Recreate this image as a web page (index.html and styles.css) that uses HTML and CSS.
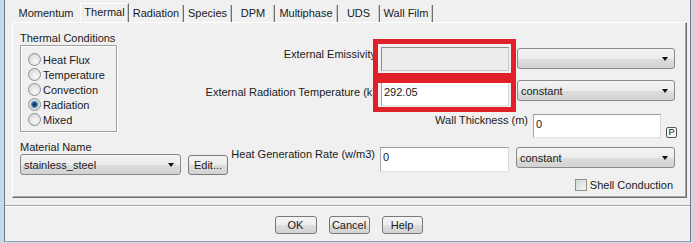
FILE: index.html
```html
<!DOCTYPE html>
<html lang="en">
<head>
    <meta charset="UTF-8">
    <title>Wall - Thermal</title>
    <link rel="stylesheet" href="styles.css">
</head>
<body>
    <div class="window">
        <div class="tabs">
            <div class="tab tab-momentum">Momentum</div>
            <div class="tab tab-thermal active">Thermal</div>
            <div class="tab tab-radiation">Radiation</div>
            <div class="tab tab-species">Species</div>
            <div class="tab tab-dpm">DPM</div>
            <div class="tab tab-multiphase">Multiphase</div>
            <div class="tab tab-uds">UDS</div>
            <div class="tab tab-wallfilm">Wall Film</div>
        </div>

        <div class="panel">
            <div class="left">
                <div class="group-label">Thermal Conditions</div>
                <div class="radio-box">
                    <div class="radio"><span class="dot"></span>Heat Flux</div>
                    <div class="radio"><span class="dot"></span>Temperature</div>
                    <div class="radio"><span class="dot"></span>Convection</div>
                    <div class="radio checked"><span class="dot"></span>Radiation</div>
                    <div class="radio"><span class="dot"></span>Mixed</div>
                </div>
                <div class="mat-label">Material Name</div>
                <div class="mat-row">
                    <div class="combo combo-mat">stainless_steel<span class="arrow"></span></div>
                    <button class="btn btn-edit">Edit...</button>
                </div>
            </div>

            <div class="right">
                <div class="row row-emis">
                    <span class="lbl">External Emissivity</span>
                    <input class="field" type="text" value="" disabled>
                    <div class="combo"><span class="arrow"></span></div>
                </div>
                <div class="row row-temp">
                    <span class="lbl">External Radiation Temperature (k)</span>
                    <input class="field" type="text" value="292.05">
                    <div class="combo">constant<span class="arrow"></span></div>
                </div>
                <div class="row row-wall">
                    <span class="lbl">Wall Thickness (m)</span>
                    <input class="field" type="text" value="0">
                    <span class="pbtn">P</span>
                </div>
                <div class="row row-heat">
                    <span class="lbl">Heat Generation Rate (w/m3)</span>
                    <input class="field" type="text" value="0">
                    <div class="combo">constant<span class="arrow"></span></div>
                </div>
                <div class="row row-shell">
                    <span class="check"></span>
                    <span class="check-label">Shell Conduction</span>
                </div>
            </div>
        </div>

        <div class="footer">
            <button class="btn btn-ok">OK</button>
            <button class="btn btn-cancel">Cancel</button>
            <button class="btn btn-help">Help</button>
        </div>

        <!-- red highlight boxes -->
        <div class="mark mark-emis"></div>
        <div class="mark mark-temp"></div>
    </div>
</body>
</html>
```

FILE: styles.css
```css
body {
    margin: 0;
    background-color: #c6d9ee;
    font-family: "Liberation Sans", Arial, sans-serif;
    font-size: 11px;
    color: #1a1a1a;
}

.window {
    position: relative;
    height: 242px;
    margin: 0 3px 0 4px;
    padding-top: 3px;
    box-sizing: border-box;
    background-color: #f0f0f0;
    border-left: 1px solid #6f7985;
    border-right: 1px solid #6f7985;
    border-bottom: 1px solid #9aa3ad;
}

/* tabs */
.tabs {
    display: flex;
    align-items: flex-end;
    height: 19px;
    margin-left: 7px;
}

.tab {
    height: 17px;
    line-height: 17px;
    text-align: center;
    box-sizing: border-box;
    border-right: 1px solid #6e6e6e;
    box-shadow: inset -1px 0 0 #c8c8c8;
}

.tab.active {
    height: 19px;
    line-height: 17px;
    border-top: 1px solid #fff;
    border-left: 1px solid #fff;
}

.tab-momentum { width: 68px; border-right: none; box-shadow: none; }
.tab-thermal { width: 49px; }
.tab-radiation { width: 55px; }
.tab-species { width: 48px; }
.tab-dpm { width: 43px; }
.tab-multiphase { width: 63px; }
.tab-uds { width: 42px; }
.tab-wallfilm { width: 53px; }

/* tab page */
.panel {
    display: flex;
    height: 176px;
    margin: 0 3px 0 7px;
    padding: 8px 0 0 7px;
    box-sizing: border-box;
    border: 1px solid;
    border-color: #fff #6d6d6d #6d6d6d #fff;
    box-shadow: inset -1px -1px 0 #a8a8a8;
}

.left {
    width: 208px;
    flex: none;
}

.group-label, .mat-label {
    line-height: 14px;
}

.radio-box {
    width: 97px;
    height: 87px;
    padding: 6px 0 0 7px;
    box-sizing: border-box;
    border: 1px solid #a0a0a0;
    box-shadow: 1px 1px 0 #fff, inset 1px 1px 0 #fff;
}

.radio {
    display: flex;
    align-items: center;
    height: 15px;
}

.dot {
    width: 13px;
    height: 13px;
    margin-right: 2px;
    box-sizing: border-box;
    border: 1px solid #8e8f8f;
    border-radius: 50%;
    background: radial-gradient(circle at 60% 65%, #fbfbfb 0, #e6e6e6 45%, #cfcfcf 100%);
}

.radio.checked .dot {
    background: radial-gradient(circle, #0f2f50 0, #1f4f7c 2px, #5e97c6 3px, #b8d2e8 4px, #e4e4e4 5px, #d2d2d2 100%);
}

.mat-label {
    margin-top: 8px;
}

.mat-row {
    display: flex;
    align-items: flex-start;
}

/* combo boxes and buttons */
.combo {
    display: flex;
    align-items: center;
    justify-content: space-between;
    width: 158px;
    height: 21px;
    padding: 0 6px 0 3px;
    box-sizing: border-box;
    border: 1px solid #8a8a8a;
    border-radius: 3px;
    background: linear-gradient(#f4f4f4 0%, #ececec 50%, #dedede 51%, #d2d2d2 100%);
}

.combo-mat {
    width: 161px;
}

.arrow {
    margin-left: auto;
    width: 0;
    height: 0;
    border-style: solid;
    border-width: 4px 3.5px 0 3.5px;
    border-color: #111 transparent transparent transparent;
}

.btn {
    height: 18px;
    padding: 0;
    box-sizing: border-box;
    border: 1px solid #7a7a7a;
    border-radius: 3px;
    background: linear-gradient(#f4f4f4 0%, #ececec 50%, #dedede 51%, #d2d2d2 100%);
    font-family: inherit;
    font-size: 11px;
    color: #1a1a1a;
}

.btn-edit {
    width: 40px;
    height: 20px;
    margin: 1px 0 0 7px;
}

/* right side rows */
.right {
    flex: 1;
}

.row {
    display: flex;
    align-items: flex-start;
}

.lbl {
    flex: none;
    display: flex;
    justify-content: flex-end;
    white-space: nowrap;
    line-height: 14px;
}

.field {
    flex: none;
    width: 128px;
    height: 24px;
    margin: 0 0 0 5px;
    padding: 2px 2px 7px 2px;
    box-sizing: border-box;
    border: 1px solid;
    border-color: #9c9c9c #d8d8d8 #e2e2e2 #a8a8a8;
    background-color: #fff;
    font-family: inherit;
    font-size: 11px;
    line-height: 13px;
    color: #1a1a1a;
    outline: none;
}

.field:disabled {
    background-color: #ececec;
    border-color: #8c8c8c #c8c8c8 #c8c8c8 #8c8c8c;
}

.row-emis { margin-top: 16px; }
.row-emis .lbl { width: 148px; }
.row-emis .combo { margin: 1px 0 0 8px; }

.row-temp { margin-top: 9px; }
.row-temp .lbl { width: 148px; padding-top: 5px; }
.row-temp .field { margin-top: 2px; }
.row-temp .combo { margin-left: 8px; }

.row-wall { margin-top: 7px; }
.row-wall .lbl { width: 300px; }
.row-wall .field { margin-top: 1px; }

.pbtn {
    width: 11px;
    height: 11px;
    margin: 14px 0 0 5px;
    box-sizing: border-box;
    border: 1px solid #555;
    border-radius: 2px;
    background-color: #f4f4f4;
    font-size: 9px;
    line-height: 9px;
    text-align: center;
}

.row-heat { margin-top: 9px; }
.row-heat .lbl { width: 147px; }
.row-heat .field { width: 129px; height: 25px; padding-bottom: 8px; }
.row-heat .combo { width: 159px; margin-left: 7px; }

.row-shell {
    margin-top: 6px;
    justify-content: flex-end;
    padding-right: 13px;
}

.check {
    width: 12px;
    height: 12px;
    margin-top: 1px;
    box-sizing: border-box;
    border: 1px solid #8e8f8f;
    background: linear-gradient(135deg, #d4d4d4, #f6f6f6);
}

.check-label {
    margin-left: 3px;
    line-height: 14px;
}

/* bottom buttons */
.footer {
    display: flex;
    justify-content: center;
    gap: 12px;
    margin-top: 7px;
    padding: 10px 0 0 2px;
    border-top: 1px solid #a0a0a0;
    box-shadow: inset 0 1px 0 #fff;
}

.btn-ok { width: 42px; }
.btn-cancel { width: 41px; }
.btn-help { width: 41px; }

/* red annotation boxes */
.mark {
    position: absolute;
    left: 368px;
    width: 143px;
    box-sizing: border-box;
    border: 5px solid #e0202b;
}

.mark-emis {
    top: 39px;
    height: 39px;
}

.mark-temp {
    top: 78px;
    height: 34px;
}
```
